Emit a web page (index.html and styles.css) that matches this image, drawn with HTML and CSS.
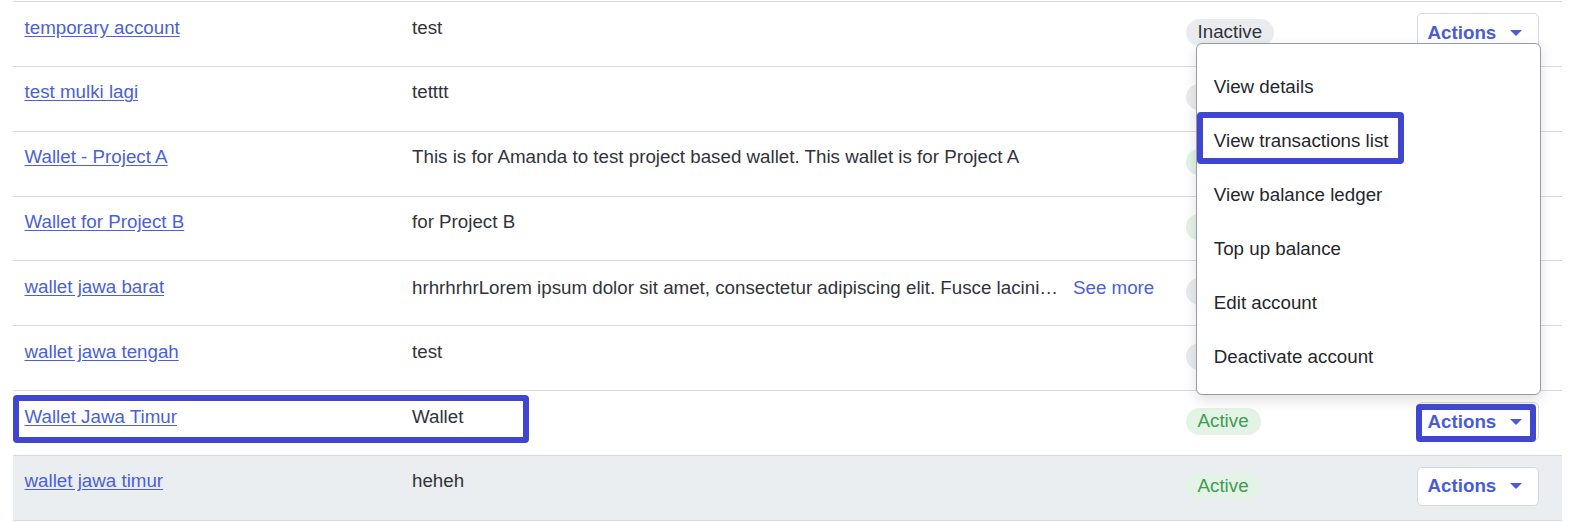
FILE: index.html
```html
<!DOCTYPE html>
<html lang="en">
<head>
<meta charset="utf-8">
<title>Accounts</title>
<link rel="stylesheet" href="styles.css">
</head>
<body>
<div class="table">
  <div class="row">
    <div class="cell"><a class="link" href="#">temporary account</a></div>
    <div class="cell">test</div>
    <div class="cell status"><span class="badge inactive">Inactive</span></div>
    <div class="cell actions">
      <div class="dropdown">
        <button class="btn">Actions <svg class="caret" width="12" height="6" viewBox="0 0 12 6"><path d="M0 0H12L6 6Z"/></svg></button>
        <div class="menu">
          <div class="menu-item">View details</div>
          <div class="menu-item">View transactions list</div>
          <div class="menu-item">View balance ledger</div>
          <div class="menu-item">Top up balance</div>
          <div class="menu-item">Edit account</div>
          <div class="menu-item">Deactivate account</div>
        </div>
      </div>
    </div>
  </div>
  <div class="row">
    <div class="cell"><a class="link" href="#">test mulki lagi</a></div>
    <div class="cell">tetttt</div>
    <div class="cell status"><span class="badge inactive">Inactive</span></div>
    <div class="cell actions"><button class="btn">Actions <svg class="caret" width="12" height="6" viewBox="0 0 12 6"><path d="M0 0H12L6 6Z"/></svg></button></div>
  </div>
  <div class="row">
    <div class="cell"><a class="link" href="#">Wallet - Project A</a></div>
    <div class="cell">This is for Amanda to test project based wallet. This wallet is for Project A</div>
    <div class="cell status"><span class="badge active">Active</span></div>
    <div class="cell actions"><button class="btn">Actions <svg class="caret" width="12" height="6" viewBox="0 0 12 6"><path d="M0 0H12L6 6Z"/></svg></button></div>
  </div>
  <div class="row">
    <div class="cell"><a class="link" href="#">Wallet for Project B</a></div>
    <div class="cell">for Project B</div>
    <div class="cell status"><span class="badge active">Active</span></div>
    <div class="cell actions"><button class="btn">Actions <svg class="caret" width="12" height="6" viewBox="0 0 12 6"><path d="M0 0H12L6 6Z"/></svg></button></div>
  </div>
  <div class="row">
    <div class="cell"><a class="link" href="#">wallet jawa barat</a></div>
    <div class="cell desc-more">
      <span class="trunc">hrhrhrhrLorem ipsum dolor sit amet, consectetur adipiscing elit. Fusce lacinia arcu et nulla tincidunt, vel viverra nisi.</span>
      <a class="see-more" href="#">See more</a>
    </div>
    <div class="cell status"><span class="badge inactive">Inactive</span></div>
    <div class="cell actions"><button class="btn">Actions <svg class="caret" width="12" height="6" viewBox="0 0 12 6"><path d="M0 0H12L6 6Z"/></svg></button></div>
  </div>
  <div class="row">
    <div class="cell"><a class="link" href="#">wallet jawa tengah</a></div>
    <div class="cell">test</div>
    <div class="cell status"><span class="badge inactive">Inactive</span></div>
    <div class="cell actions"><button class="btn">Actions <svg class="caret" width="12" height="6" viewBox="0 0 12 6"><path d="M0 0H12L6 6Z"/></svg></button></div>
  </div>
  <div class="row">
    <div class="cell"><a class="link" href="#">Wallet Jawa Timur</a></div>
    <div class="cell">Wallet</div>
    <div class="cell status"><span class="badge active">Active</span></div>
    <div class="cell actions"><button class="btn">Actions <svg class="caret" width="12" height="6" viewBox="0 0 12 6"><path d="M0 0H12L6 6Z"/></svg></button></div>
  </div>
  <div class="row hover">
    <div class="cell"><a class="link" href="#">wallet jawa timur</a></div>
    <div class="cell">heheh</div>
    <div class="cell status"><span class="badge active">Active</span></div>
    <div class="cell actions"><button class="btn">Actions <svg class="caret" width="12" height="6" viewBox="0 0 12 6"><path d="M0 0H12L6 6Z"/></svg></button></div>
  </div>
</div>

<div class="hl hl-menu"></div>
<div class="hl hl-row"></div>
<div class="hl hl-btn"></div>
</body>
</html>
```
FILE: styles.css
```css
html, body {
  margin: 0;
  padding: 0;
  background: #ffffff;
}

body {
  font-family: "Liberation Sans", Arial, sans-serif;
  font-size: 18.75px;
  color: #30343b;
  position: relative;
  overflow: hidden;
}

.table {
  width: 1549px;
  margin: 1px 0 0 13px;
  border-top: 1px solid #d6dae0;
}

.row {
  display: grid;
  grid-template-columns: 387.5px 773.5px 231px 1fr;
  height: 64.85px;
  box-sizing: border-box;
  border-bottom: 1px solid #d6dae0;
}

.row.hover {
  background: #ebeef1;
}

.cell {
  padding: 11.5px 11.5px 0;
  line-height: 28px;
  min-width: 0;
  white-space: nowrap;
}

.link {
  color: #4b5fd8;
  text-decoration: underline;
  text-underline-offset: 2px;
}

.desc-more {
  display: flex;
  align-items: baseline;
}

.trunc {
  display: block;
  max-width: 651px;
  overflow: hidden;
  text-overflow: ellipsis;
  white-space: nowrap;
  padding-top: 1px;
}

.see-more {
  margin-left: 10px;
  color: #4b5fd8;
  text-decoration: none;
}

.status {
  padding-top: 16px;
}

.badge {
  display: inline-block;
  height: 26.5px;
  line-height: 26.5px;
  padding: 0 12px;
  border-radius: 14px;
}

.badge.inactive {
  background: #e9ecef;
  color: #30343b;
}

.badge.active {
  background: #e3f3e6;
  color: #3f9b52;
}

.actions {
  padding-top: 11px;
}

.dropdown {
  position: relative;
  display: inline-block;
}

.btn {
  display: inline-flex;
  align-items: center;
  gap: 14px;
  height: 39px;
  box-sizing: border-box;
  padding: 0 16px 0 10px;
  border: 1px solid #d3d8df;
  border-radius: 5px;
  background: #ffffff;
  font-family: "Liberation Sans", Arial, sans-serif;
  font-size: 18.75px;
  font-weight: bold;
  color: #4a5bd8;
  cursor: pointer;
}

.caret {
  display: block;
  fill: #4a5bd8;
}

.menu {
  position: absolute;
  left: -220.3px;
  top: 30.3px;
  width: 344.3px;
  box-sizing: border-box;
  padding: 15.5px 0 10px;
  background: #ffffff;
  border: 1px solid #959ba7;
  border-radius: 6px;
  box-shadow: 0 5px 14px rgba(0, 0, 0, 0.13);
  z-index: 5;
}

.menu-item {
  height: 54px;
  line-height: 54px;
  padding: 0 16.6px;
  color: #24272c;
}

.hl {
  position: absolute;
  box-sizing: border-box;
  border: 6px solid #4146ce;
  border-radius: 4px;
  z-index: 10;
}

.hl-menu {
  left: 1197px;
  top: 112px;
  width: 207px;
  height: 52px;
}

.hl-row {
  left: 13px;
  top: 395px;
  width: 516px;
  height: 48px;
}

.hl-btn {
  left: 1416px;
  top: 404px;
  width: 120px;
  height: 38px;
}
```
